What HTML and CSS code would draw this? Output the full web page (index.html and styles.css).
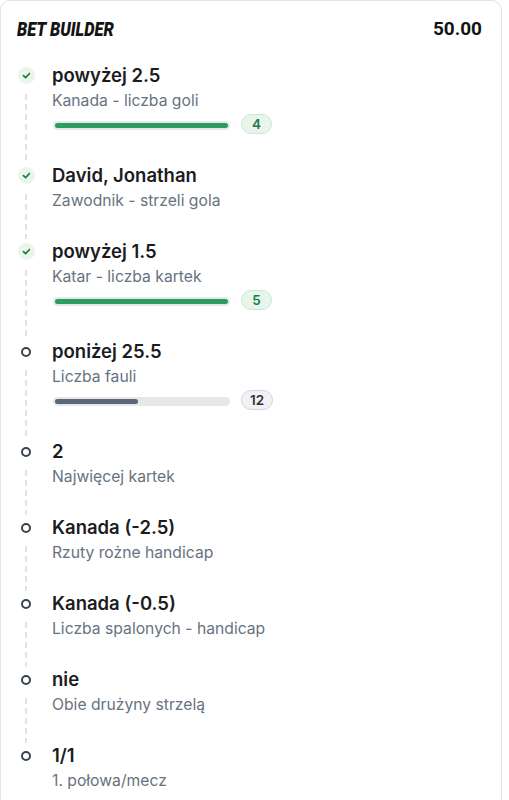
FILE: index.html
```html
<!DOCTYPE html>
<html lang="pl">
<head>
<meta charset="utf-8">
<title>Bet Builder</title>
<link rel="stylesheet" href="styles.css">
</head>
<body>
<div class="card">
  <div class="header">
    <span class="title">BET BUILDER</span>
    <span class="amount">50.00</span>
  </div>
  <ul class="legs">
    <li class="leg won">
      <div class="rail"><span class="marker"><svg viewBox="0 0 10 10" width="9" height="9"><path d="M1.6 5.2 L4 7.4 L8.4 2.8" fill="none" stroke="#1f7a3c" stroke-width="1.9" stroke-linecap="round" stroke-linejoin="round"/></svg></span><span class="line"></span></div>
      <div class="body">
        <div class="pick">powyżej 2.5</div>
        <div class="market">Kanada - liczba goli</div>
        <div class="progress"><div class="track"><div class="fill" style="width:100%"></div></div><span class="badge">4</span></div>
      </div>
    </li>
    <li class="leg won">
      <div class="rail"><span class="marker"><svg viewBox="0 0 10 10" width="9" height="9"><path d="M1.6 5.2 L4 7.4 L8.4 2.8" fill="none" stroke="#1f7a3c" stroke-width="1.9" stroke-linecap="round" stroke-linejoin="round"/></svg></span><span class="line"></span></div>
      <div class="body">
        <div class="pick">David, Jonathan</div>
        <div class="market">Zawodnik - strzeli gola</div>
      </div>
    </li>
    <li class="leg won">
      <div class="rail"><span class="marker"><svg viewBox="0 0 10 10" width="9" height="9"><path d="M1.6 5.2 L4 7.4 L8.4 2.8" fill="none" stroke="#1f7a3c" stroke-width="1.9" stroke-linecap="round" stroke-linejoin="round"/></svg></span><span class="line"></span></div>
      <div class="body">
        <div class="pick">powyżej 1.5</div>
        <div class="market">Katar - liczba kartek</div>
        <div class="progress"><div class="track"><div class="fill" style="width:100%"></div></div><span class="badge">5</span></div>
      </div>
    </li>
    <li class="leg open">
      <div class="rail"><span class="marker"></span><span class="line"></span></div>
      <div class="body">
        <div class="pick">poniżej 25.5</div>
        <div class="market">Liczba fauli</div>
        <div class="progress"><div class="track"><div class="fill" style="width:48%"></div></div><span class="badge">12</span></div>
      </div>
    </li>
    <li class="leg open">
      <div class="rail"><span class="marker"></span><span class="line"></span></div>
      <div class="body">
        <div class="pick">2</div>
        <div class="market">Najwięcej kartek</div>
      </div>
    </li>
    <li class="leg open">
      <div class="rail"><span class="marker"></span><span class="line"></span></div>
      <div class="body">
        <div class="pick">Kanada (-2.5)</div>
        <div class="market">Rzuty rożne handicap</div>
      </div>
    </li>
    <li class="leg open">
      <div class="rail"><span class="marker"></span><span class="line"></span></div>
      <div class="body">
        <div class="pick">Kanada (-0.5)</div>
        <div class="market">Liczba spalonych - handicap</div>
      </div>
    </li>
    <li class="leg open">
      <div class="rail"><span class="marker"></span><span class="line"></span></div>
      <div class="body">
        <div class="pick">nie</div>
        <div class="market">Obie drużyny strzelą</div>
      </div>
    </li>
    <li class="leg open">
      <div class="rail"><span class="marker"></span></div>
      <div class="body">
        <div class="pick">1/1</div>
        <div class="market">1. połowa/mecz</div>
      </div>
    </li>
  </ul>
</div>
</body>
</html>
```

FILE: styles.css
```css
*, *::before, *::after { box-sizing: border-box; }

html, body {
  margin: 0;
  padding: 0;
  background: #ffffff;
}

body {
  font-family: Inter, "Noto Sans", sans-serif;
  color: #1c1c1e;
}

.card {
  width: 502px;
  min-height: 820px;
  border: 1px solid #e4e4e4;
  border-radius: 10px;
  background: #ffffff;
}

.header {
  display: flex;
  justify-content: space-between;
  align-items: center;
  padding: 16px 19px 0 16px;
  height: 40px;
}

.title {
  display: inline-block;
  font-family: Roboto, "Liberation Sans", sans-serif;
  font-weight: 900;
  font-style: italic;
  font-size: 20px;
  line-height: 24px;
  color: #141414;
  transform: scaleX(0.82);
  transform-origin: left center;
  white-space: nowrap;
}

.amount {
  font-family: Roboto, "Liberation Sans", sans-serif;
  font-weight: 700;
  font-size: 19px;
  line-height: 24px;
  color: #141414;
}

.legs {
  list-style: none;
  margin: 0;
  padding: 22px 0 0 0;
}

.leg {
  display: flex;
}

.rail {
  width: 51px;
  flex: none;
  display: flex;
  flex-direction: column;
  align-items: center;
  padding-right: 1px;
}

.marker {
  height: 25px;
  display: flex;
  align-items: center;
  justify-content: center;
  flex: none;
}

.won .marker svg {
  width: 17px;
  height: 17px;
  padding: 4px;
  border-radius: 50%;
  background: #e9f6ec;
}

.open .marker::before {
  content: "";
  width: 10px;
  height: 10px;
  border: 2px solid #3a4450;
  border-radius: 50%;
}

.line {
  flex: 1;
  width: 2px;
  margin-top: 6px;
  background: repeating-linear-gradient(to bottom, #e2e2e2 0 6px, transparent 6px 10px);
}

.body {
  flex: 1;
  padding-bottom: 26px;
}

.pick {
  font-size: 18.5px;
  line-height: 25px;
  font-weight: 600;
  color: #1c1c1e;
}

.market {
  font-size: 15.7px;
  line-height: 25px;
  color: #67727f;
}

.progress {
  display: flex;
  align-items: center;
  height: 24px;
  gap: 12px;
  padding-left: 1px;
}

.track {
  width: 177px;
  height: 9px;
  padding: 2px;
  border-radius: 5px;
  background: #e6e7e9;
}

.fill {
  height: 5px;
  border-radius: 3px;
  background: #2b9d5e;
}

.open .fill {
  background: #5a6777;
}

.badge {
  min-width: 31px;
  height: 20px;
  padding: 0 8px;
  border-radius: 10px;
  display: inline-flex;
  align-items: center;
  justify-content: center;
  font-size: 13.5px;
  font-weight: 600;
  margin-top: -2px;
  margin-left: -1px;
}

.won .badge {
  background: #e7f5ec;
  border: 1px solid #cbe8d5;
  color: #1f7a48;
}

.open .badge {
  background: #f1f2f3;
  border: 1px solid #d3d5d8;
  color: #2c333b;
}
```
